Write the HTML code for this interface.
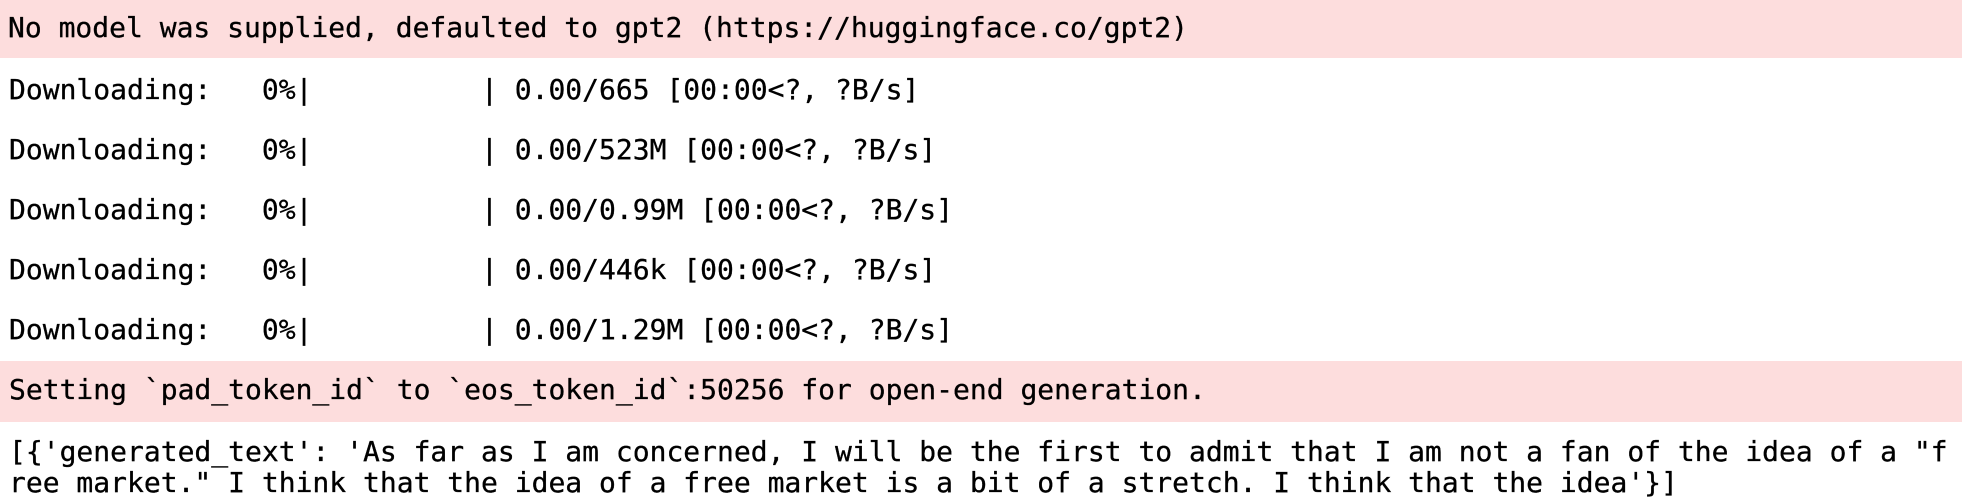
<!DOCTYPE html>
<html><head><meta charset="utf-8"><style>
html,body{margin:0;padding:0;background:#fff;width:1962px;height:504px;overflow:hidden;position:relative}
.p{position:absolute;left:0;width:1962px;background:#fddddd}
.l{position:absolute;left:9px;margin:0;white-space:pre;font-family:"DejaVu Sans Mono","Liberation Mono",monospace;font-size:28px;line-height:32px;color:#000;-webkit-text-stroke:0.3px #000}
</style></head><body>
<div class="p" style="top:0;height:58px"></div>
<div class="p" style="top:361px;height:61px"></div>
<div class="l" style="left:8px;top:12px">No model was supplied, defaulted to gpt2 (https://huggingface.co/gpt2)</div>
<div class="l" style="top:74px">Downloading:   0%|          | 0.00/665 [00:00&lt;?, ?B/s]</div>
<div class="l" style="top:134px">Downloading:   0%|          | 0.00/523M [00:00&lt;?, ?B/s]</div>
<div class="l" style="top:194px">Downloading:   0%|          | 0.00/0.99M [00:00&lt;?, ?B/s]</div>
<div class="l" style="top:254px">Downloading:   0%|          | 0.00/446k [00:00&lt;?, ?B/s]</div>
<div class="l" style="top:314px">Downloading:   0%|          | 0.00/1.29M [00:00&lt;?, ?B/s]</div>
<div class="l" style="top:374px">Setting `pad_token_id` to `eos_token_id`:50256 for open-end generation.</div>
<div class="l" style="top:436px">[{'generated_text': 'As far as I am concerned, I will be the first to admit that I am not a fan of the idea of a "f</div>
<div class="l" style="top:467px">ree market." I think that the idea of a free market is a bit of a stretch. I think that the idea'}]</div>
</body></html>
